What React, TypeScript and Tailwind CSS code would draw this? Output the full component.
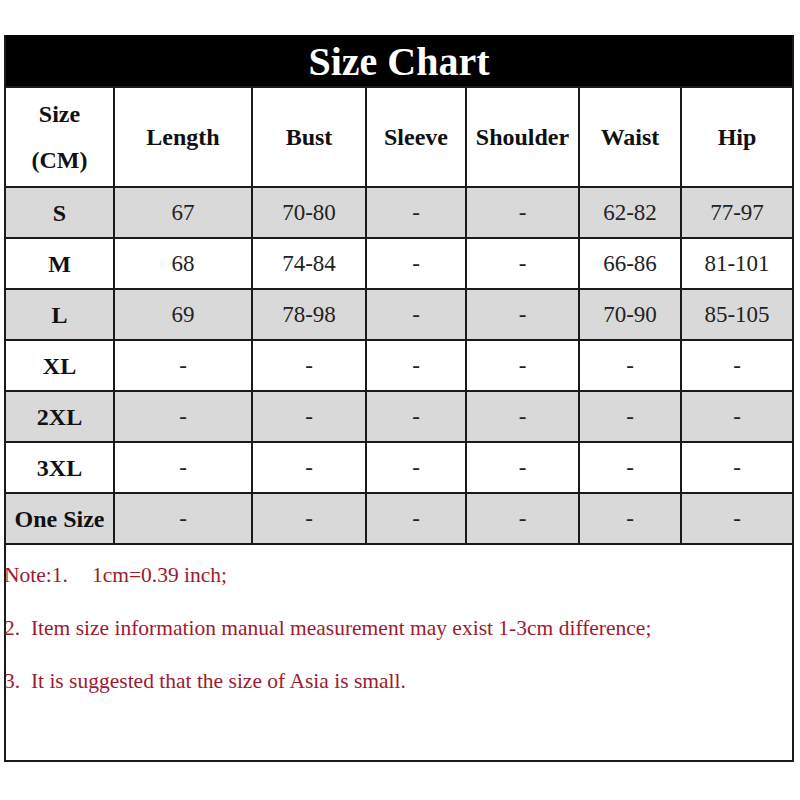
const columns = ["Length", "Bust", "Sleeve", "Shoulder", "Waist", "Hip"];

const rows: { size: string; values: string[] }[] = [
  { size: "S", values: ["67", "70-80", "-", "-", "62-82", "77-97"] },
  { size: "M", values: ["68", "74-84", "-", "-", "66-86", "81-101"] },
  { size: "L", values: ["69", "78-98", "-", "-", "70-90", "85-105"] },
  { size: "XL", values: ["-", "-", "-", "-", "-", "-"] },
  { size: "2XL", values: ["-", "-", "-", "-", "-", "-"] },
  { size: "3XL", values: ["-", "-", "-", "-", "-", "-"] },
  { size: "One Size", values: ["-", "-", "-", "-", "-", "-"] },
];

export default function App() {
  return (
    <main
      className="min-h-[800px] w-[800px] bg-white pl-[4px] pt-[35px]"
      style={{ fontFamily: '"Liberation Serif", "Times New Roman", serif' }}
    >
      <div className="grid w-[790px] grid-cols-[107px_136px_112px_98px_111px_100px_110px] gap-[2px] bg-[#1a1a1a] p-[2px] pt-0">
        {/* title bar */}
        <div className="col-span-7 flex h-[51px] items-center justify-center bg-black pt-[3px] text-[40px] font-bold text-white">
          Size Chart
        </div>

        {/* header row */}
        <div className="flex h-[98px] flex-col items-center justify-center bg-white text-[24px] font-bold leading-[46px] text-[#111]">
          <span>Size</span>
          <span>(CM)</span>
        </div>
        {columns.map((c) => (
          <div
            key={c}
            className="flex h-[98px] items-center justify-center bg-white text-[24px] font-bold text-[#111]"
          >
            {c}
          </div>
        ))}

        {/* data rows */}
        {rows.map((r, i) => {
          const bg = i % 2 === 0 ? "bg-[#d9d9d9]" : "bg-white";
          return (
            <div key={r.size} className="contents">
              <div
                className={`flex h-[49px] items-center justify-center pt-[1px] text-[24px] font-bold text-[#111] ${bg}`}
              >
                {r.size}
              </div>
              {r.values.map((v, j) => (
                <div
                  key={j}
                  className={`flex h-[49px] items-center justify-center pt-[1px] text-[23px] text-[#222] ${bg}`}
                >
                  {v}
                </div>
              ))}
            </div>
          );
        })}

        {/* notes */}
        <div className="col-span-7 h-[215px] whitespace-pre bg-white pt-[4px] text-[21.5px] leading-[53px] text-[#9e1a2e]">
          <div className="-ml-[2px]">
            Note:1.<span className="ml-[24px]">1cm=0.39 inch;</span>
          </div>
          <div className="-ml-[2px]">{"2.  Item size information manual measurement may exist 1-3cm difference;"}</div>
          <div className="-ml-[2px]">{"3.  It is suggested that the size of Asia is small."}</div>
        </div>
      </div>
    </main>
  );
}
